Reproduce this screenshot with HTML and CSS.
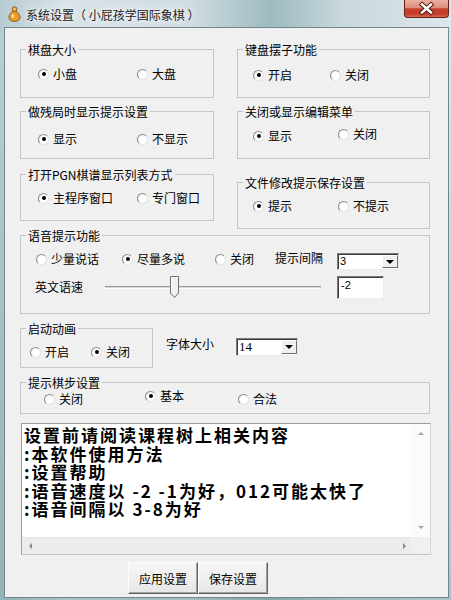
FILE: index.html
```html
<!DOCTYPE html>
<html lang="zh-CN">
<head>
    <meta charset="UTF-8">
    <title>系统设置（小屁孩学国际象棋）</title>
    <link rel="stylesheet" href="styles.css">
</head>
<body>
<div class="window">
    <!-- Title bar -->
    <div class="titlebar">
        <svg class="app-icon" width="13" height="16" viewBox="0 0 13 16">
            <circle cx="6.5" cy="3.2" r="2.4" fill="#f2b848" stroke="#8a5a14" stroke-width="1"/>
            <path d="M6.5 5.2C3.4 5.2 1 9 1 11.6 1 14 3.4 15.4 6.5 15.4S12 14 12 11.6C12 9 9.6 5.2 6.5 5.2Z" fill="#e89a2c" stroke="#8a5a14" stroke-width="1"/>
            <ellipse cx="4.8" cy="10" rx="1.3" ry="2" fill="#fbe3a8"/>
        </svg>
        <span class="title">系统设置（ 小屁孩学国际象棋 ）</span>
        <div class="close-btn">
            <svg width="45" height="17" viewBox="0 0 45 17">
                <path d="M18 4.5L27 12.5M27 4.5L18 12.5" stroke="#4a140c" stroke-width="4.4" stroke-linecap="square"/>
                <path d="M18 4.5L27 12.5M27 4.5L18 12.5" stroke="#fff" stroke-width="2.6" stroke-linecap="square"/>
            </svg>
        </div>
    </div>

    <!-- Dialog body -->
    <div class="client">
        <div class="columns">
            <div class="col">
                <fieldset class="group g-board">
                    <legend>棋盘大小</legend>
                    <div class="opts pad-left">
                        <label class="opt w-left"><span class="radio on"></span>小盘</label>
                        <label class="opt"><span class="radio"></span>大盘</label>
                    </div>
                </fieldset>
                <fieldset class="group g-endgame">
                    <legend>做残局时显示提示设置</legend>
                    <div class="opts pad-left">
                        <label class="opt w-left"><span class="radio on"></span>显示</label>
                        <label class="opt"><span class="radio"></span>不显示</label>
                    </div>
                </fieldset>
                <fieldset class="group g-pgn">
                    <legend>打开PGN棋谱显示列表方式</legend>
                    <div class="opts pad-left">
                        <label class="opt w-left"><span class="radio on"></span>主程序窗口</label>
                        <label class="opt"><span class="radio"></span>专门窗口</label>
                    </div>
                </fieldset>
            </div>
            <div class="col">
                <fieldset class="group g-keyboard">
                    <legend>键盘摆子功能</legend>
                    <div class="opts pad-right">
                        <label class="opt w-key"><span class="radio on"></span>开启</label>
                        <label class="opt"><span class="radio"></span>关闭</label>
                    </div>
                </fieldset>
                <fieldset class="group g-menu">
                    <legend>关闭或显示编辑菜单</legend>
                    <div class="opts pad-right">
                        <label class="opt w-right"><span class="radio on"></span>显示</label>
                        <label class="opt raised"><span class="radio"></span>关闭</label>
                    </div>
                </fieldset>
                <fieldset class="group g-save">
                    <legend>文件修改提示保存设置</legend>
                    <div class="opts pad-right">
                        <label class="opt w-right"><span class="radio on"></span>提示</label>
                        <label class="opt"><span class="radio"></span>不提示</label>
                    </div>
                </fieldset>
            </div>
        </div>

        <fieldset class="group g-voice">
            <legend>语音提示功能</legend>
            <div class="voice-row">
                <label class="opt w-v1"><span class="radio"></span>少量说话</label>
                <label class="opt w-v2"><span class="radio on"></span>尽量多说</label>
                <label class="opt w-v3"><span class="radio"></span>关闭</label>
                <span class="field-label">提示间隔</span>
                <div class="combo combo-interval">
                    <span class="combo-value">3</span>
                    <span class="combo-btn"><span class="arrow-down"></span></span>
                </div>
            </div>
            <div class="speed-row">
                <span class="speed-label">英文语速</span>
                <div class="slider">
                    <div class="slider-track"></div>
                    <svg class="slider-thumb" width="9" height="22" viewBox="0 0 9 22">
                        <path d="M0.5 0.5H8.5V17L4.5 21.5L0.5 17Z" fill="#f0f0f0" stroke="#6e6e6e"/>
                        <path d="M1.5 1.5H7.5M1.5 1.5V16.6" stroke="#fff"/>
                    </svg>
                </div>
                <div class="textbox">-2</div>
            </div>
        </fieldset>

        <div class="startup-row">
            <fieldset class="group g-anim">
                <legend>启动动画</legend>
                <div class="opts pad-anim">
                    <label class="opt w-anim"><span class="radio"></span>开启</label>
                    <label class="opt"><span class="radio on"></span>关闭</label>
                </div>
            </fieldset>
            <span class="font-label">字体大小</span>
            <div class="combo combo-font">
                <span class="combo-value serif">14</span>
                <span class="combo-btn"><span class="arrow-down"></span></span>
            </div>
        </div>

        <fieldset class="group g-hint">
            <legend>提示棋步设置</legend>
            <div class="opts pad-hint">
                <label class="opt w-h1"><span class="radio"></span>关闭</label>
                <label class="opt w-h2 raised-more"><span class="radio on"></span>基本</label>
                <label class="opt"><span class="radio"></span>合法</label>
            </div>
        </fieldset>

        <div class="memo">
            <div class="memo-text">设置前请阅读课程树上相关内容
:本软件使用方法
:设置帮助
:语音速度以 -2 -1为好，012可能太快了
:语音间隔以 3-8为好</div>
            <div class="vscroll">
                <span class="arrow-up small"></span>
                <span class="arrow-down small"></span>
            </div>
            <div class="hscroll">
                <span class="arrow-left"></span>
                <span class="arrow-right"></span>
            </div>
            <div class="scroll-corner"></div>
        </div>

        <div class="buttons">
            <button class="btn">应用设置</button>
            <button class="btn">保存设置</button>
        </div>
    </div>
</div>
</body>
</html>
```

FILE: styles.css
```css
/* General */
* {
    box-sizing: border-box;
}

body {
    margin: 0;
    font-family: "Noto Sans CJK SC", sans-serif;
    font-size: 12px;
    color: #000;
}

.window {
    width: 451px;
    height: 600px;
    padding: 0 2px 2px 4px;
    display: flex;
    flex-direction: column;
    background:
        linear-gradient(180deg, rgba(255, 255, 255, 0) 10%, rgba(80, 130, 135, 0.35) 100%),
        linear-gradient(90deg, #b7cbd3 0%, #d8e3e8 14%, #d0dde2 42%, #9dbbbf 60%, #c8d8dd 76%, #dde7eb 100%);
}

/* Title bar */
.titlebar {
    height: 27px;
    display: flex;
    align-items: flex-start;
}

.app-icon {
    margin: 6px 0 0 4px;
}

.title {
    margin: 7px 0 0 5px;
    line-height: 15px;
    color: #1b1b1b;
    white-space: pre;
    text-shadow: 0 0 5px #fff, 0 0 8px rgba(255, 255, 255, 0.9);
}

.close-btn {
    margin-left: auto;
    width: 45px;
    height: 18px;
    border: 1px solid #6a2217;
    border-top: none;
    border-radius: 0 0 4px 4px;
    background: linear-gradient(180deg, #eab0a2 0%, #dd8e7c 45%, #c9412c 52%, #c43d28 80%, #d9684f 100%);
}

.close-btn svg {
    display: block;
    margin: 0 -1px;
}

/* Client area */
.client {
    flex: 1;
    border: 1px solid #74858f;
    background: #f0f0f0;
    padding: 14px 0 0 15px;
}

.columns {
    display: grid;
    grid-template-columns: 194px 193px;
    column-gap: 23px;
    align-items: start;
}

.col {
    display: flex;
    flex-direction: column;
}

/* Group boxes */
.group {
    margin: 0;
    padding: 0;
    min-width: 0;
    border: 1px solid #c3c7cb;
}

.group legend {
    margin-left: 5px;
    padding: 0 2px;
    height: 15px;
    line-height: 15px;
}

.g-board { height: 56px; padding-top: 10px; }
.g-endgame { height: 55px; padding-top: 13px; margin-top: 6px; }
.g-pgn { height: 54px; padding-top: 9px; margin-top: 8px; }
.g-keyboard { height: 56px; padding-top: 11px; }
.g-menu { height: 55px; padding-top: 10px; margin-top: 6px; }
.g-save { height: 54px; padding-top: 9px; margin-top: 16px; }

.g-voice {
    width: 410px;
    height: 86px;
    padding-top: 9px;
    margin-top: -1px;
}

.g-anim {
    width: 133px;
    height: 47px;
    padding-top: 9px;
}

.g-hint {
    width: 410px;
    height: 39px;
    padding-top: 2px;
    margin-top: 7px;
}

/* Radio options */
.opts {
    display: flex;
    align-items: center;
    height: 14px;
}

.pad-left { padding-left: 17px; }
.pad-right { padding-left: 15px; }
.pad-anim { padding-left: 9px; }
.pad-hint { padding-left: 23px; }

.opt {
    display: flex;
    align-items: center;
    gap: 4px;
    line-height: 14px;
    white-space: nowrap;
}

.w-left { width: 99px; }
.w-key { width: 77px; }
.w-right { width: 85px; }
.w-anim { width: 61px; }
.w-h1 { width: 101px; }
.w-h2 { width: 93px; }
.w-v1 { width: 86px; }
.w-v2 { width: 93px; }
.w-v3 { width: 60px; }

.raised {
    align-self: flex-start;
    margin-top: -2px;
}

.raised-more {
    align-self: flex-start;
    margin-top: -3px;
}

.radio {
    width: 11px;
    height: 11px;
    flex: none;
    border-radius: 50%;
    border: 1px solid;
    border-color: #8c8c8c #e2e2e2 #e2e2e2 #8c8c8c;
    background: radial-gradient(circle at 60% 60%, #fff 45%, #ececec 100%);
    display: flex;
    align-items: center;
    justify-content: center;
}

.radio.on::after {
    content: "";
    width: 4px;
    height: 4px;
    border-radius: 50%;
    background: #000;
}

/* Voice group rows */
.voice-row {
    display: flex;
    align-items: flex-start;
    padding-left: 15px;
    height: 18px;
}

.field-label {
    line-height: 14px;
    margin-top: -1px;
}

.combo {
    display: flex;
    background: #fff;
    border: 1px solid;
    border-color: #7a7a7a #ececec #ececec #7a7a7a;
    box-shadow: inset 1px 1px #3c3c3c;
}

.combo-interval {
    width: 62px;
    height: 17px;
    margin: 1px 0 0 14px;
}

.combo-value {
    flex: 1;
    padding: 1px 0 0 2px;
    font-family: "Liberation Sans", sans-serif;
    font-size: 11px;
    line-height: 13px;
}

.combo-value.serif {
    font-family: "Liberation Serif", serif;
    font-size: 13px;
}

.combo-btn {
    width: 16px;
    margin: 1px 0 1px 0;
    border: 1px solid;
    border-color: #fff #6e6e6e #6e6e6e #fff;
    background: #f0f0f0;
    display: flex;
    align-items: center;
    justify-content: center;
}

.arrow-down {
    width: 0;
    height: 0;
    border-left: 4px solid transparent;
    border-right: 4px solid transparent;
    border-top: 4px solid #000;
}

.arrow-down.small,
.arrow-up.small {
    border-left-width: 3px;
    border-right-width: 3px;
    border-top-color: #a6a6a6;
}

.arrow-up {
    width: 0;
    height: 0;
    border-left: 3px solid transparent;
    border-right: 3px solid transparent;
    border-bottom: 3px solid #a6a6a6;
}

.arrow-down.small {
    border-top-width: 3px;
}

.arrow-left {
    width: 0;
    height: 0;
    border-top: 3px solid transparent;
    border-bottom: 3px solid transparent;
    border-right: 3px solid #8a8a8a;
}

.arrow-right {
    width: 0;
    height: 0;
    border-top: 3px solid transparent;
    border-bottom: 3px solid transparent;
    border-left: 3px solid #8a8a8a;
}

.speed-row {
    display: flex;
    align-items: center;
    height: 22px;
    margin-top: 6px;
    padding-left: 14px;
}

.speed-label {
    width: 70px;
    line-height: 14px;
}

.slider {
    position: relative;
    width: 216px;
    height: 22px;
    display: flex;
    align-items: center;
}

.slider-track {
    width: 100%;
    height: 3px;
    border-top: 1px solid #9a9a9a;
    border-bottom: 1px solid #fff;
    background: #d6d6d6;
}

.slider-thumb {
    position: absolute;
    left: 65px;
    top: 0;
}

.textbox {
    width: 47px;
    height: 23px;
    margin-left: 16px;
    background: #fff;
    border: 1px solid;
    border-color: #7a7a7a #ececec #ececec #7a7a7a;
    box-shadow: inset 1px 1px #3c3c3c;
    padding: 2px 0 0 3px;
    font-family: "Liberation Sans", sans-serif;
    font-size: 11px;
    line-height: 12px;
}

/* Startup animation + font size */
.startup-row {
    display: flex;
    align-items: flex-start;
    margin-top: 7px;
}

.font-label {
    margin: 16px 0 0 13px;
    line-height: 14px;
}

.combo-font {
    width: 62px;
    height: 18px;
    margin: 17px 0 0 22px;
}

/* Memo box */
.memo {
    width: 410px;
    height: 132px;
    margin: 9px 0 0 1px;
    border: 1px solid;
    border-color: #9c9c9c #d8d8d8 #c4c4c4 #9c9c9c;
    display: grid;
    grid-template-columns: 1fr 19px;
    grid-template-rows: 1fr 17px;
}

.memo-text {
    background: #fff;
    padding: 2px 0 0 2px;
    white-space: pre;
    overflow: hidden;
    font-size: 17px;
    font-weight: 700;
    letter-spacing: 2px;
    line-height: 18.5px;
}

.vscroll {
    background: #fbfbfb;
    display: flex;
    flex-direction: column;
    align-items: center;
    justify-content: space-between;
    padding: 8px 0 8px;
}

.hscroll {
    background: #ececec;
    border-top: 1px solid #e2e2e2;
    display: flex;
    align-items: center;
    justify-content: space-between;
    padding: 0 5px 0 7px;
}

.scroll-corner {
    background: #f0f0f0;
}

/* Buttons */
.buttons {
    display: flex;
    margin-top: 7px;
    padding-left: 108px;
}

.btn {
    width: 70px;
    height: 32px;
    margin: 0;
    padding: 0;
    font-family: "Noto Sans CJK SC", sans-serif;
    font-size: 12px;
    color: #000;
    border: 1px solid;
    border-color: #fdfdfd #646464 #646464 #fdfdfd;
    box-shadow: inset -1px -1px #a0a0a0;
    background: linear-gradient(180deg, #f7f7f7, #e6e6e6);
}
```
